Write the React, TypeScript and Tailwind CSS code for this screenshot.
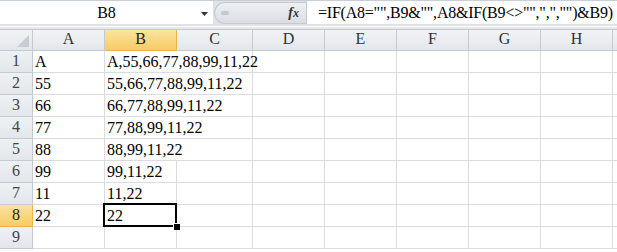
import React from "react";

const cols = ["A", "B", "C", "D", "E", "F", "G", "H"];
const widths = [72, 72, 76, 72, 72, 72, 72, 72];
const rows: [string, string][] = [
  ["A", "A,55,66,77,88,99,11,22"],
  ["55", "55,66,77,88,99,11,22"],
  ["66", "66,77,88,99,11,22"],
  ["77", "77,88,99,11,22"],
  ["88", "88,99,11,22"],
  ["99", "99,11,22"],
  ["11", "11,22"],
  ["22", "22"],
  ["", ""],
];

const font = { fontFamily: '"Liberation Serif", "Noto Sans CJK TC", serif' };

export default function App() {
  return (
    <div className="w-[617px] h-[252px] overflow-hidden bg-white relative" style={font}>
      {/* formula bar */}
      <div className="h-[24px] flex bg-[#dfe3e8] border-t border-[#c9ced6]">
        <div className="w-[213px] bg-white flex items-end relative">
          <div className="flex-1 text-center text-[16px] leading-[16px] pb-[3px] text-black">B8</div>
          <svg className="absolute left-[201px] top-[11px]" width="8" height="5" viewBox="0 0 8 5">
            <path d="M0 0 L7 0 L3.5 4 Z" fill="#333" />
          </svg>
        </div>
        <div className="w-[93px] flex items-center pl-[1px] py-[1px]">
          <div className="h-[22px] w-full rounded-l-[11px] bg-gradient-to-b from-[#eef0f3] to-[#dadee4] border border-[#c3c9d1] border-r-0 relative flex items-center justify-end pr-[7px]">
            <div className="absolute left-[6px] top-[8px] w-[8px] h-[4px] rounded-full bg-[#c2c8d0]" />
            <span className="italic font-bold text-[14px] text-[#333]" style={{ fontFamily: '"Liberation Serif", serif' }}>
              f<span className="text-[12px]">x</span>
            </span>
          </div>
        </div>
        <div className="flex-1 bg-white border-l border-[#c3c9d1] flex items-end pl-[11px] pb-[3px]">
          <span className="text-[16px] leading-[16px] whitespace-nowrap text-black tracking-[-0.22px]">
            =IF(A8="",B9&amp;"",A8&amp;IF(B9&lt;&gt;"",",","")&amp;B9)
          </span>
        </div>
      </div>
      <div className="h-[2px] bg-[#dfe3e8]" />
      <div className="h-[1px] bg-white" />
      <div className="h-[3px] bg-[#e4e7eb] border-b border-[#c5cad1]" />
      {/* header row */}
      <div className="flex h-[21px]">
        <div className="w-[33px] shrink-0 bg-gradient-to-b from-[#f1f3f6] to-[#e3e7ec] border-r border-b border-[#c5cad1] relative">
          <svg className="absolute right-[3px] bottom-[3px]" width="12" height="12" viewBox="0 0 12 12">
            <path d="M12 0 L12 12 L0 12 Z" fill="#c8cdd4" />
          </svg>
        </div>
        {cols.map((c, i) => (
          <div
            key={c}
            style={{ width: widths[i] }}
            className={
              "shrink-0 flex items-end justify-center pb-[3px] text-[16px] leading-[16px] border-r border-b " +
              (c === "B"
                ? "bg-gradient-to-b from-[#fbe39e] to-[#f6cc62] border-r-[#e8b546] border-b-[#e8b546] text-[#222]"
                : "bg-gradient-to-b from-[#f1f3f6] to-[#e3e7ec] border-[#c5cad1] text-[#333]")
            }
          >
            {c}
          </div>
        ))}
        <div className="flex-1 bg-gradient-to-b from-[#f1f3f6] to-[#e3e7ec] border-b border-[#c5cad1]" />
      </div>
      {/* body rows */}
      {rows.map(([a, b], r) => {
        const sel = r === 7;
        return (
          <div key={r} className="flex h-[22px]">
            <div
              className={
                "w-[33px] shrink-0 flex items-end justify-center pb-[3px] text-[16px] leading-[16px] border-r border-b " +
                (sel
                  ? "bg-gradient-to-b from-[#fbe39e] to-[#f6cc62] border-r-[#e8b546] border-b-[#e8b546] text-[#222]"
                  : "bg-gradient-to-b from-[#eef1f4] to-[#e3e7ec] border-[#c5cad1] text-[#444]")
              }
            >
              {r + 1}
            </div>
            {cols.map((c, i) => {
              const text = c === "A" ? a : c === "B" ? b : "";
              const overflow = c === "B";
              const hideRight = c === "B" && text.length * 8 > 70;
              return (
                <div
                  key={c}
                  style={{ width: widths[i] }}
                  className={
                    "shrink-0 relative border-b border-[#dadcdf] " +
                    (hideRight ? "" : "border-r border-r-[#dadcdf]")
                  }
                >
                  {text && (
                    <span
                      className={
                        "absolute left-[2px] bottom-[2px] text-[16px] leading-[16px] whitespace-nowrap text-black " +
                        (overflow ? "z-10" : "")
                      }
                    >
                      {text}
                    </span>
                  )}
                  {sel && c === "B" && (
                    <div className="absolute left-[-2px] top-[-2px] right-[-1px] bottom-[-1px] border-2 border-black z-20">
                      <div className="absolute right-[-5px] bottom-[-5px] w-[7px] h-[7px] bg-black border-l border-t border-white" />
                    </div>
                  )}
                </div>
              );
            })}
            <div className="flex-1 border-b border-[#dadcdf]" />
          </div>
        );
      })}
    </div>
  );
}
